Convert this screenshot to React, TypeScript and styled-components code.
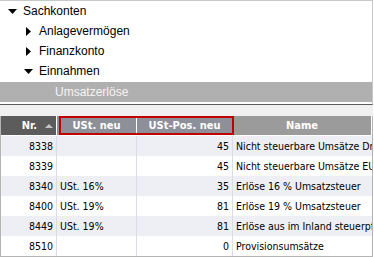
import React from "react";
import styled, { createGlobalStyle } from "styled-components";

const Global = createGlobalStyle`
  html, body { margin: 0; padding: 0; background: #ffffff; }
  body { width: 374px; height: 257px; overflow: hidden; }
`;

const Frame = styled.div`
  width: 373px;
  height: 257px;
  display: flex;
  flex-direction: column;
  font-family: "Liberation Sans", Arial, sans-serif;
  background: #f0f0f0;
`;

const TreePanel = styled.div`
  height: 105px;
  background: #ffffff;
  border-top: 1px solid #c8c8c8;
  border-right: 1px solid #c8c8c8;
  border-bottom: 1px solid #5a5a5a;
  display: flex;
  flex-direction: column;
`;

const TreeRow = styled.div<{ $indent: number; $selected?: boolean }>`
  height: 20px;
  display: flex;
  align-items: center;
  padding-left: ${(p) => p.$indent}px;
  font-size: 12px;
  color: ${(p) => (p.$selected ? "#f4f4f4" : "#000000")};
  background: ${(p) => (p.$selected ? "#b0b0b0" : "transparent")};
  margin-top: ${(p) => (p.$selected ? "1px" : "0")};
`;

const Caret = styled.span`
  display: inline-flex;
  align-items: center;
  justify-content: center;
  width: 10px;
  margin-right: 6px;
`;

const Gap = styled.div`
  height: 11px;
  background: #f0f0f0;
`;

const Table = styled.div`
  flex: 1;
  display: flex;
  flex-direction: column;
  background: #ffffff;
  border-left: 1px solid #b4b4b4;
  border-right: 1px solid #b4b4b4;
  border-bottom: 1px solid #b4b4b4;
  font-family: "DejaVu Sans Condensed", "DejaVu Sans", sans-serif;
  font-stretch: condensed;
`;

const COLS = "56px 80px 96px 1fr";

const HeaderRow = styled.div`
  position: relative;
  display: grid;
  grid-template-columns: ${COLS};
  height: 19px;
  border-bottom: 1px solid #ffffff;
`;

const HeaderCell = styled.div<{ $tone: "dark" | "mid" | "light"; $align?: string }>`
  display: flex;
  align-items: center;
  justify-content: ${(p) => p.$align || "center"};
  padding-right: ${(p) => (p.$align === "flex-end" ? "3px" : "0")};
  font-size: 11px;
  font-weight: bold;
  color: #ffffff;
  border-right: 1px solid #ffffff;
  background: ${(p) =>
    p.$tone === "dark" ? "#5c5c5c" : p.$tone === "mid" ? "#8d8f99" : "#9b9b9b"};
  &:last-child { border-right: none; }
`;

const SortArrow = styled.span`
  width: 0;
  height: 0;
  border-left: 4px solid transparent;
  border-right: 4px solid transparent;
  border-bottom: 4px solid #c4c4c4;
  margin-left: 8px;
`;

const Highlight = styled.div`
  position: absolute;
  left: 58px;
  top: 0;
  width: 175px;
  height: 19px;
  box-sizing: border-box;
  border: 2px solid #c00000;
  pointer-events: none;
`;

const DataRow = styled.div<{ $odd: boolean }>`
  display: grid;
  grid-template-columns: ${COLS};
  height: 20px;
  background: ${(p) => (p.$odd ? "#eeeff4" : "#ffffff")};
`;

const Cell = styled.div<{ $right?: boolean }>`
  display: flex;
  align-items: center;
  justify-content: ${(p) => (p.$right ? "flex-end" : "flex-start")};
  padding: 0 3px 0 3px;
  font-size: 10.5px;
  color: #000000;
  white-space: nowrap;
  overflow: hidden;
  border-right: 1px solid #dcdce4;
  &:last-child { border-right: none; }
`;

const CaretDown = () => (
  <svg width={9} height={5} viewBox="0 0 9 5">
    <path d="M0 0 L9 0 L4.5 5 Z" fill="#000" />
  </svg>
);

const CaretRight = () => (
  <svg width={5} height={9} viewBox="0 0 5 9">
    <path d="M0 0 L5 4.5 L0 9 Z" fill="#000" />
  </svg>
);

const rows = [
  { nr: "8338", ust: "", pos: "45", name: "Nicht steuerbare Umsätze Drittland" },
  { nr: "8339", ust: "", pos: "45", name: "Nicht steuerbare Umsätze EU" },
  { nr: "8340", ust: "USt. 16%", pos: "35", name: "Erlöse 16 % Umsatzsteuer" },
  { nr: "8400", ust: "USt. 19%", pos: "81", name: "Erlöse 19 % Umsatzsteuer" },
  { nr: "8449", ust: "USt. 19%", pos: "81", name: "Erlöse aus im Inland steuerpflichtigen" },
  { nr: "8510", ust: "", pos: "0", name: "Provisionsumsätze" },
];

export default function App() {
  return (
    <>
      <Global />
      <Frame>
        <TreePanel>
          <TreeRow $indent={7}>
            <Caret><CaretDown /></Caret>Sachkonten
          </TreeRow>
          <TreeRow $indent={23}>
            <Caret><CaretRight /></Caret>Anlagevermögen
          </TreeRow>
          <TreeRow $indent={23}>
            <Caret><CaretRight /></Caret>Finanzkonto
          </TreeRow>
          <TreeRow $indent={23}>
            <Caret><CaretDown /></Caret>Einnahmen
          </TreeRow>
          <TreeRow $indent={55} $selected>Umsatzerlöse</TreeRow>
        </TreePanel>
        <Gap />
        <Table>
          <HeaderRow>
            <HeaderCell $tone="dark" $align="flex-end">
              Nr.<SortArrow />
            </HeaderCell>
            <HeaderCell $tone="mid">USt. neu</HeaderCell>
            <HeaderCell $tone="mid">USt-Pos. neu</HeaderCell>
            <HeaderCell $tone="light">Name</HeaderCell>
            <Highlight />
          </HeaderRow>
          {rows.map((r, i) => (
            <DataRow key={r.nr} $odd={i % 2 === 0}>
              <Cell $right>{r.nr}</Cell>
              <Cell>{r.ust}</Cell>
              <Cell $right>{r.pos}</Cell>
              <Cell>{r.name}</Cell>
            </DataRow>
          ))}
        </Table>
      </Frame>
    </>
  );
}
